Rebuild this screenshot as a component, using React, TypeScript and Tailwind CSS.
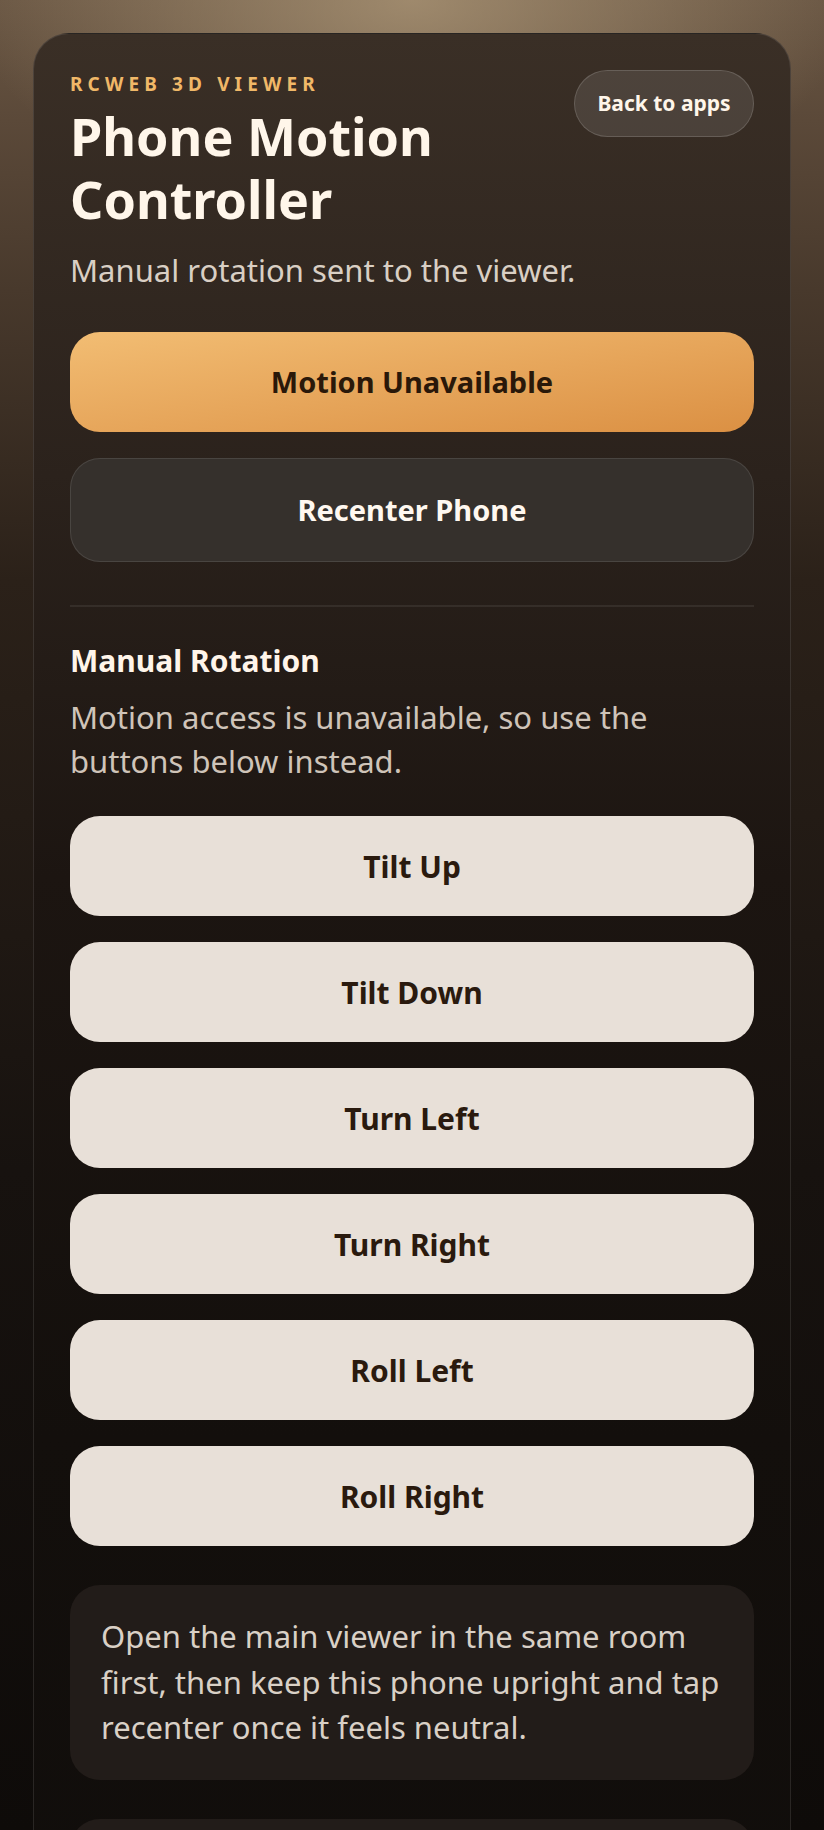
import React from 'react';

const controls = ['Tilt Up', 'Tilt Down', 'Turn Left', 'Turn Right', 'Roll Left', 'Roll Right'];

export default function App() {
  return (
    <div
      className="min-h-screen px-[33px] pt-[33px] bg-[radial-gradient(440px_230px_at_50%_0%,rgba(176,154,122,0.75),rgba(176,154,122,0)),linear-gradient(180deg,#6a5744_0px,#5b4939_120px,#48392c_290px,#2b2119_580px,#17120f_1170px,#0e0b09_1830px)]"
      style={{ fontFamily: '"Trebuchet MS", "Noto Sans", sans-serif' }}
    >
      <div className="rounded-[36px] border border-white/10 bg-[linear-gradient(180deg,#3a2f26_0%,#2b221c_22%,#1c1511_42%,#130f0c_70%,#100d0b_100%)] px-[36px] pt-[36px] pb-[60px]">
        <div className="flex items-start justify-between gap-4">
          <div className="min-w-0">
            <div className="mt-[2px] text-[19px] leading-[24px] font-bold tracking-[0.27em] text-[#f0b868]">
              RCWEB 3D VIEWER
            </div>
            <h1 className="mt-[8px] text-[52px] leading-[63px] font-bold text-[#fff6ea]">
              Phone Motion Controller
            </h1>
          </div>
          <button className="shrink-0 h-[67px] w-[180px] rounded-full border border-white/15 bg-white/10 text-[21px] font-bold text-[#fff6ea]">
            Back to apps
          </button>
        </div>

        <p className="mt-[20px] text-[31px] leading-[40px] text-[#d9cfc4]">
          Manual rotation sent to the viewer.
        </p>

        <div className="mt-[42px] flex flex-col gap-[26px]">
          <button className="h-[100px] w-full rounded-[30px] bg-gradient-to-br from-[#f2bd73] to-[#db9043] text-[29px] font-bold text-[#2a1809]">
            Motion Unavailable
          </button>
          <button className="h-[104px] w-full rounded-[30px] border border-white/10 bg-[#35302c] text-[29px] font-bold text-[#fff8f0]">
            Recenter Phone
          </button>
        </div>

        <div className="mt-[43px] h-[2px] bg-white/[0.07]" />

        <h2 className="mt-[34px] text-[30px] leading-[40px] font-bold text-[#fff5ea]">Manual Rotation</h2>
        <p className="mt-[14px] text-[31px] leading-[44px] text-[#cfc4b9]">
          Motion access is unavailable, so use the buttons below instead.
        </p>

        <div className="mt-[33px] flex flex-col gap-[26px]">
          {controls.map((label) => (
            <button
              key={label}
              className="h-[100px] w-full rounded-[30px] bg-[#e8e0d8] text-[30px] font-bold text-[#2a1a0e]"
            >
              {label}
            </button>
          ))}
        </div>

        <div className="mt-[39px] rounded-[30px] bg-[#221c19] px-[31px] py-[29px] text-[31px] leading-[45.5px] text-[#d9d0c6]">
          Open the main viewer in the same room first, then keep this phone upright and tap recenter once it feels neutral.
        </div>

        <div className="mt-[39px] h-[160px] rounded-[30px] bg-[#221c19]" />
      </div>
    </div>
  );
}
